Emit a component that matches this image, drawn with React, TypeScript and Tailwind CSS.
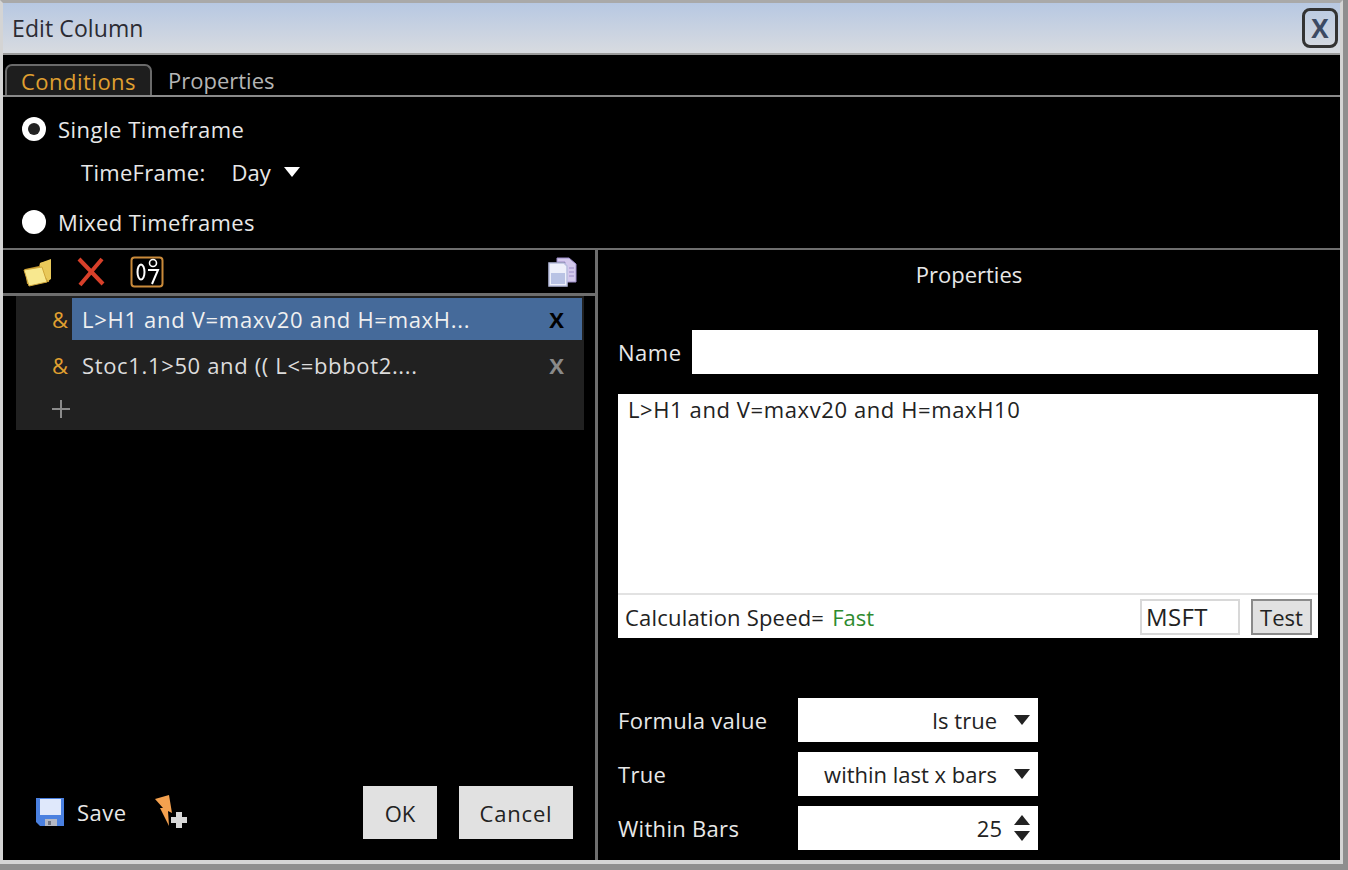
const font = { fontFamily: '"Open Sans", "Noto Sans", sans-serif' };

function FolderIcon() {
  return (
    <svg width="30" height="30" viewBox="0 0 30 30">
      <path d="M2 12 L4 27 L26 25 L28 3 L17 6 L16 9 Z" fill="#b98f2c" />
      <path d="M17 6 L28 2 L28 22 L25 24 L17 12 Z" fill="#e9c95a" />
      <path d="M1 13 L19 10 L24 25 L6 29 Z" fill="#f8e88f" stroke="#d0a63a" strokeWidth="1" />
    </svg>
  );
}

function DigitsIcon() {
  return (
    <svg width="34" height="32" viewBox="0 0 34 32">
      <rect x="1.5" y="1.5" width="31" height="29" rx="3" fill="none" stroke="#c98a3a" strokeWidth="2" />
      <ellipse cx="11" cy="16" rx="3.5" ry="7.5" fill="none" stroke="#fff" strokeWidth="2" />
      <circle cx="23" cy="7" r="3.5" fill="none" stroke="#fff" strokeWidth="1.6" />
      <path d="M18 14 H28 L22 28" fill="none" stroke="#fff" strokeWidth="2" />
    </svg>
  );
}

function CopyIcon() {
  return (
    <svg width="30" height="30" viewBox="0 0 30 30">
      <path d="M10 1 H22 L29 7 V25 H18 V5 H10 Z" fill="#d3c9ec" stroke="#9c8cc9" strokeWidth="1" />
      <path d="M22 11 H27 M22 15 H27 M22 19 H27" stroke="#9c8cc9" strokeWidth="1" />
      <path d="M2 6 H17 L20 9 V29 H2 Z" fill="#eef0fa" stroke="#b9bedf" strokeWidth="1.5" />
      <rect x="4" y="16" width="14" height="11" fill="#b9c3e4" />
    </svg>
  );
}

function SaveIcon() {
  return (
    <svg width="30" height="30" viewBox="0 0 30 30">
      <path d="M1 1 H29 V29 H5 L1 25 Z" fill="#4a80e0" />
      <rect x="5" y="2" width="21" height="16" fill="#dfe8fb" />
      <rect x="10" y="22" width="12" height="7" fill="#b4b8c4" />
      <rect x="13" y="24" width="3" height="4" fill="#6d7280" />
    </svg>
  );
}

function BoltPlusIcon() {
  return (
    <svg width="34" height="36" viewBox="0 0 34 36">
      <path d="M1 5 L15 1 L18 19 L14 17 L15 32 L6 14 L9 14 Z" fill="#f4a14f" />
      <path d="M22 18 H28 V23 H33 V29 H28 V34 H22 V29 H17 V23 H22 Z" fill="#d8d8d8" />
    </svg>
  );
}

function Caret({ up = false, className = "" }: { up?: boolean; className?: string }) {
  return (
    <svg width="16" height="10" viewBox="0 0 16 10" className={className}>
      <path d={up ? "M0 10 H16 L8 0 Z" : "M0 0 H16 L8 10 Z"} fill="currentColor" />
    </svg>
  );
}

function FormRow({ label, children }: { label: string; children: React.ReactNode }) {
  return (
    <div className="flex h-[44px] items-center">
      <span className="w-[180px] tracking-[0.3px] text-[#e8e8e8]">{label}</span>
      <div className="flex h-[44px] w-[240px] items-center justify-end bg-white text-[#222]">{children}</div>
    </div>
  );
}

export default function App() {
  return (
    <div style={font} className="h-[870px] w-[1348px] overflow-hidden bg-[#8e8e8e] text-[22px] leading-none">
      <div className="flex h-[864px] w-[1343px] flex-col border-[3px] border-b-4 border-[#d4d4d4] border-t-[#a9a9a9] bg-black">
        {/* title bar */}
        <div className="flex h-[50px] shrink-0 items-center justify-between bg-gradient-to-b from-[#b7c8e2] to-[#d8dbe0] pl-[9px] pr-[2px]">
          <span className="text-[23px] tracking-[0.1px] text-[#2b2b33]">Edit Column</span>
          <div className="flex h-[40px] w-[36px] items-center justify-center rounded-[8px] border-[3px] border-[#333] text-[26px] font-bold text-[#3c4a63]">
            X
          </div>
        </div>
        <div className="h-[2px] shrink-0 bg-[#9a9a9a]" />

        {/* tabs */}
        <div className="flex h-[42px] shrink-0 items-end border-b-2 border-[#8a8a8a] pl-[2px]">
          <div className="flex h-[31px] w-[147px] items-center justify-center rounded-t-[7px] border-2 border-b-0 border-[#6a6a6a] bg-[#1e1e1e] tracking-[0.5px] text-[#e0a030]">
            Conditions
          </div>
          <div className="flex h-[31px] items-center pl-[16px] text-[#b5b5b5]">Properties</div>
        </div>

        {/* timeframe options */}
        <div className="flex h-[153px] shrink-0 flex-col border-b-2 border-[#6e6e6e] pl-[19px] text-[#e8e8e8]">
          <div className="mt-[20px] flex items-center gap-[12px]">
            <div className="flex h-[24px] w-[24px] items-center justify-center rounded-full bg-white">
              <div className="h-[12px] w-[12px] rounded-full bg-[#222]" />
            </div>
            <span className="tracking-[0.5px]">Single Timeframe</span>
          </div>
          <div className="mt-[20px] flex items-center pl-[59px]">
            <span className="tracking-[0.3px]">TimeFrame:</span>
            <span className="ml-[26px]">Day</span>
            <Caret className="ml-[13px] text-white" />
          </div>
          <div className="mt-[27px] flex items-center gap-[12px]">
            <div className="h-[24px] w-[24px] rounded-full bg-white" />
            <span className="tracking-[0.4px]">Mixed Timeframes</span>
          </div>
        </div>

        {/* main */}
        <div className="flex min-h-0 flex-1">
          <div className="flex w-[592px] shrink-0 flex-col">
            <div className="flex h-[46px] shrink-0 items-center justify-between border-b-[3px] border-[#6e6e6e] pl-[20px] pr-[18px]">
              <div className="flex items-center">
                <FolderIcon />
                <svg width="30" height="30" viewBox="0 0 30 30" className="ml-[23px]">
                  <path d="M3 2 L27 27 M26 2 L4 28" stroke="#d8402a" strokeWidth="4" />
                </svg>
                <div className="ml-[24px]">
                  <DigitsIcon />
                </div>
              </div>
              <CopyIcon />
            </div>

            <div className="ml-[13px] mr-[11px] h-[134px] shrink-0 bg-[#212121] pt-[2px] text-[#dcdcdc]">
              <div className="flex h-[42px] items-center">
                <span className="w-[56px] pl-[36px] text-[#e0a030]">&amp;</span>
                <div className="flex h-[42px] w-[510px] items-center justify-between bg-[#456a9a] pl-[10px] pr-[18px] text-[#f0f0f0]">
                  <span className="tracking-[0.7px]">L&gt;H1 and V=maxv20 and H=maxH...</span>
                  <span className="font-bold text-black">X</span>
                </div>
              </div>
              <div className="mt-[4px] flex h-[42px] items-center">
                <span className="w-[56px] pl-[36px] text-[#e0a030]">&amp;</span>
                <div className="flex w-[510px] items-center justify-between pl-[10px] pr-[18px]">
                  <span className="tracking-[0.65px]">Stoc1.1&gt;50 and (( L&lt;=bbbot2....</span>
                  <span className="font-bold text-[#8a8a8a]">X</span>
                </div>
              </div>
              <div className="flex h-[45px] items-center pl-[35px]">
                <svg width="20" height="20" viewBox="0 0 20 20">
                  <path d="M10 1 V19 M1 10 H19" stroke="#8c8c8c" strokeWidth="2" />
                </svg>
              </div>
            </div>

            <div className="mt-auto mb-[21px] flex items-end pl-[32px] pr-[22px]">
              <div className="mb-[9px] flex items-center">
                <SaveIcon />
                <span className="ml-[12px] tracking-[0.5px] text-[#e8e8e8]">Save</span>
                <div className="ml-[27px]">
                  <BoltPlusIcon />
                </div>
              </div>
              <button className="ml-auto h-[53px] w-[74px] bg-[#e1e1e1] text-[#222]">OK</button>
              <button className="ml-[22px] h-[53px] w-[114px] bg-[#e1e1e1] tracking-[0.8px] text-[#222]">Cancel</button>
            </div>
          </div>

          <div className="w-[3px] shrink-0 bg-[#6e6e6e]" />

          {/* properties panel */}
          <div className="flex min-w-0 flex-1 flex-col pl-[20px] pr-[22px] text-[#e8e8e8]">
            <div className="mt-[13px] pl-[2px] text-center">Properties</div>
            <div className="mt-[45px] flex h-[44px] items-center">
              <span className="w-[74px] tracking-[0.5px]">Name</span>
              <div className="h-[44px] flex-1 bg-white" />
            </div>
            <div className="mt-[20px] flex h-[244px] flex-col bg-white text-[#222]">
              <div className="h-[201px] border-b-2 border-[#e2e2e2] pl-[10px] pt-[4px] tracking-[0.6px]">L&gt;H1 and V=maxv20 and H=maxH10</div>
              <div className="flex flex-1 items-center pl-[7px] pr-[6px]">
                <span className="tracking-[0.2px]">Calculation Speed=</span>
                <span className="ml-[8px] text-[#2e8b2e]">Fast</span>
                <div className="ml-auto flex h-[36px] w-[100px] items-center border-2 border-[#d8d8d8] pl-[4px] text-[24px] tracking-[0.4px]">MSFT</div>
                <div className="ml-[11px] flex h-[36px] w-[61px] items-center justify-center border-2 border-[#8a8a8a] bg-[#e1e1e1]">
                  Test
                </div>
              </div>
            </div>

            <div className="mt-[60px] flex flex-col gap-[10px]">
              <FormRow label="Formula value">
                <span>Is true</span>
                <Caret className="ml-[17px] mr-[8px] text-[#222]" />
              </FormRow>
              <FormRow label="True">
                <span>within last x bars</span>
                <Caret className="ml-[17px] mr-[8px] text-[#222]" />
              </FormRow>
              <FormRow label="Within Bars">
                <span>25</span>
                <div className="ml-[12px] mr-[8px] flex flex-col gap-[6px] text-[#222]">
                  <Caret up />
                  <Caret />
                </div>
              </FormRow>
            </div>
          </div>
        </div>
      </div>
    </div>
  );
}
